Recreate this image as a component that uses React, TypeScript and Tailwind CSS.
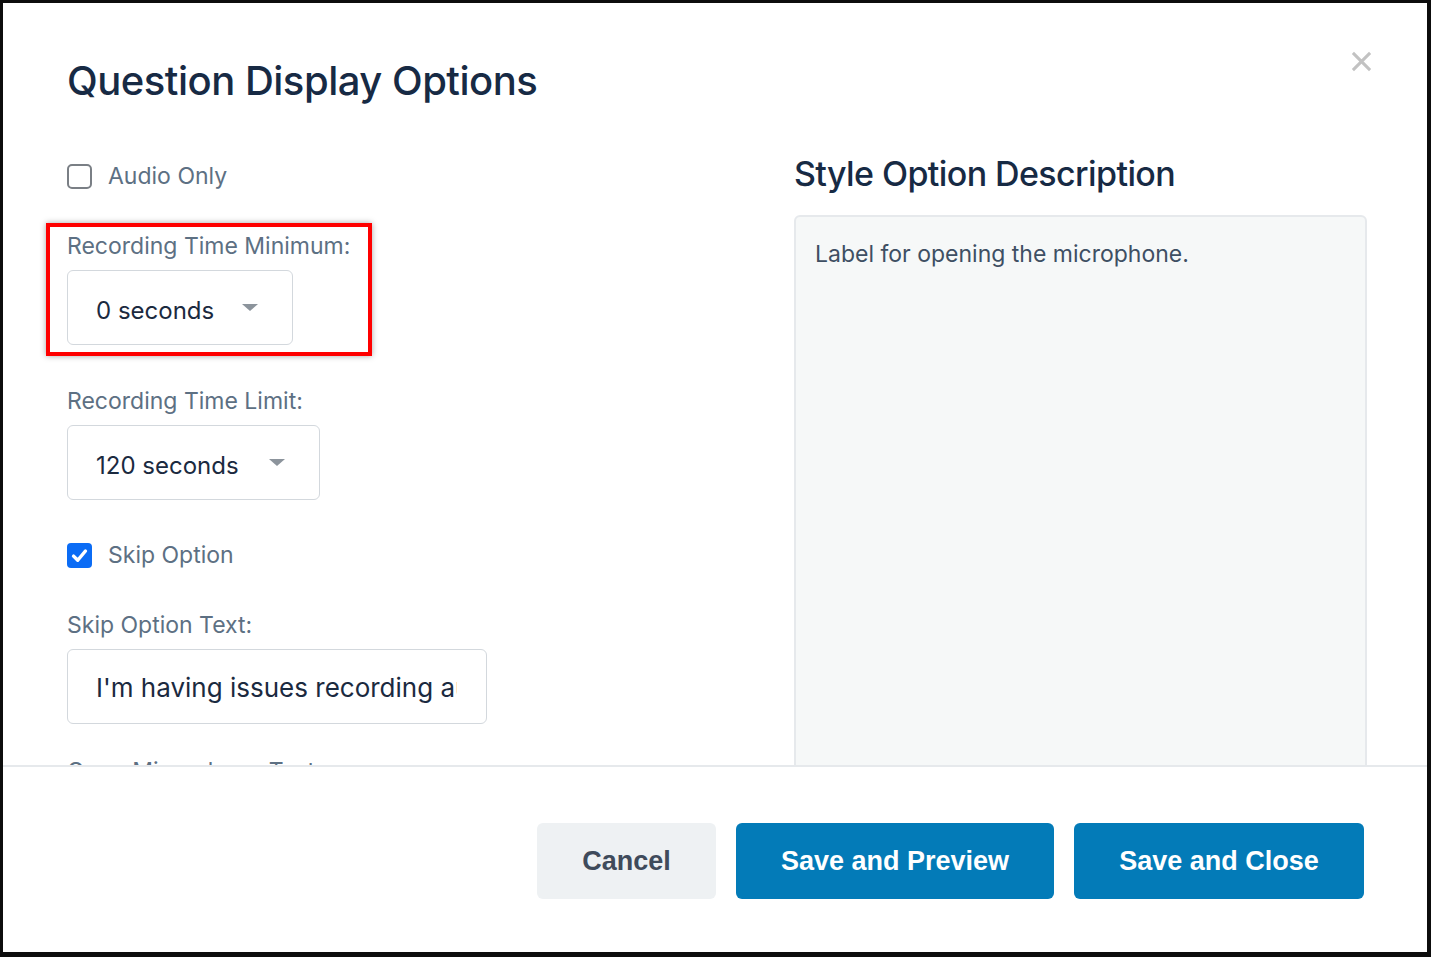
import React from "react";

const sans = { fontFamily: "Inter, 'Noto Sans', sans-serif" };
const btn = { fontFamily: "'Liberation Sans', Arial, sans-serif" };

function Caret() {
  return (
    <svg width="16" height="8" viewBox="0 0 16 8" className="shrink-0">
      <path d="M0 0 L16 0 L8 7 Z" fill="#8c949c" />
    </svg>
  );
}

function Label({ children }: { children: React.ReactNode }) {
  return (
    <div className="h-[30px] leading-[30px] text-[23px] text-[#5d7083] mb-[9px] whitespace-nowrap">{children}</div>
  );
}

function Select({ value, width }: { value: string; width: string }) {
  return (
    <div
      className={`${width} h-[75px] border border-[#d3d8dd] rounded-[6px] flex items-center pl-[28px] pr-[34px] justify-between bg-white`}
    >
      <span className="text-[24px] text-[#1b2a3f] pt-[6px]">{value}</span>
      <Caret />
    </div>
  );
}

function Check({ checked, label }: { checked?: boolean; label: string }) {
  return (
    <div className="h-[30px] flex items-center gap-[16px]">
      {checked ? (
        <div className="w-[25px] h-[25px] rounded-[4px] bg-[#0b6cf5] flex items-center justify-center">
          <svg width="19" height="19" viewBox="0 0 16 16">
            <path d="M3 8.5 L6.5 12 L13 4.2" stroke="white" strokeWidth="2.9" fill="none" strokeLinecap="round" strokeLinejoin="round" />
          </svg>
        </div>
      ) : (
        <div className="w-[25px] h-[25px] rounded-[5px] border-2 border-[#7a7f85] bg-white" />
      )}
      <span className="text-[23px] text-[#5d7083]">{label}</span>
    </div>
  );
}

export default function App() {
  return (
    <div className="w-[1431px] h-[957px] bg-[#0d0d0d] pl-[3px] pt-[3px] pr-[4px] pb-[5px]" style={sans}>
      <div className="w-full h-full bg-white flex flex-col relative">
        {/* close button */}
        <div className="absolute left-[1342px] top-[42px] w-[32px] h-[32px] flex items-center justify-center">
          <svg width="21" height="21" viewBox="0 0 22 22">
            <path d="M2 2 L20 20 M20 2 L2 20" stroke="#c2c2c2" strokeWidth="3.2" />
          </svg>
        </div>

        {/* scrolling body */}
        <div className="h-[764px] overflow-hidden flex pl-[64px] pr-[60px] border-b-2 border-[#e6e9ec]">
          <div className="w-[727px] shrink-0">
            <h1 className="mt-[53px] h-[50px] leading-[50px] text-[40px] font-medium text-[#172a44] tracking-[-0.5px]">
              Question Display Options
            </h1>
            <div className="mt-[55px]">
              <Check label="Audio Only" />
            </div>
            <div className="mt-[40px]">
              <Label>Recording Time Minimum:</Label>
              <Select value="0 seconds" width="w-[226px]" />
            </div>
            <div className="mt-[41px]">
              <Label>Recording Time Limit:</Label>
              <Select value="120 seconds" width="w-[253px]" />
            </div>
            <div className="mt-[40px]">
              <Check checked label="Skip Option" />
            </div>
            <div className="mt-[40px]">
              <Label>Skip Option Text:</Label>
              <div className="w-[420px] h-[75px] border border-[#d3d8dd] rounded-[6px] flex items-center pl-[28px]">
                <div className="w-[361px] overflow-hidden pt-[6px] leading-[34px]">
                  <span className="text-[26px] text-[#1b2a3f] whitespace-nowrap">
                    I'm having issues recording audio
                  </span>
                </div>
              </div>
            </div>
            <div className="mt-[32px]">
              <Label>Open Microphone Text:</Label>
            </div>
          </div>

          <div className="flex-1 flex flex-col">
            <h2 className="mt-[149px] h-[44px] leading-[44px] text-[34px] font-medium text-[#172a44] tracking-[-0.6px]">
              Style Option Description
            </h2>
            <div className="mt-[19px] flex-1 mb-[-20px] bg-[#f6f8f8] border-2 border-[#e6e9ec] rounded-[6px] px-[19px] pt-[22px]">
              <p className="text-[23px] text-[#3e4f63] leading-[30px]">Label for opening the microphone.</p>
            </div>
          </div>
        </div>

        {/* footer */}
        <div className="flex justify-end gap-[20px] pr-[63px] pt-[56px]" style={btn}>
          <button className="w-[179px] h-[76px] rounded-[6px] bg-[#eef1f3] text-[#3f4b5b] text-[27px] font-bold">
            Cancel
          </button>
          <button className="w-[318px] h-[76px] rounded-[6px] bg-[#037bb8] text-white text-[27px] font-bold">
            Save and Preview
          </button>
          <button className="w-[290px] h-[76px] rounded-[6px] bg-[#037bb8] text-white text-[27px] font-bold">
            Save and Close
          </button>
        </div>

        {/* highlight frame */}
        <div className="absolute left-[43px] top-[220px] w-[326px] h-[133px] border-[4px] border-[#ff0000] shadow-[0_0_6px_rgba(0,0,0,0.35)] pointer-events-none" />
      </div>
    </div>
  );
}
